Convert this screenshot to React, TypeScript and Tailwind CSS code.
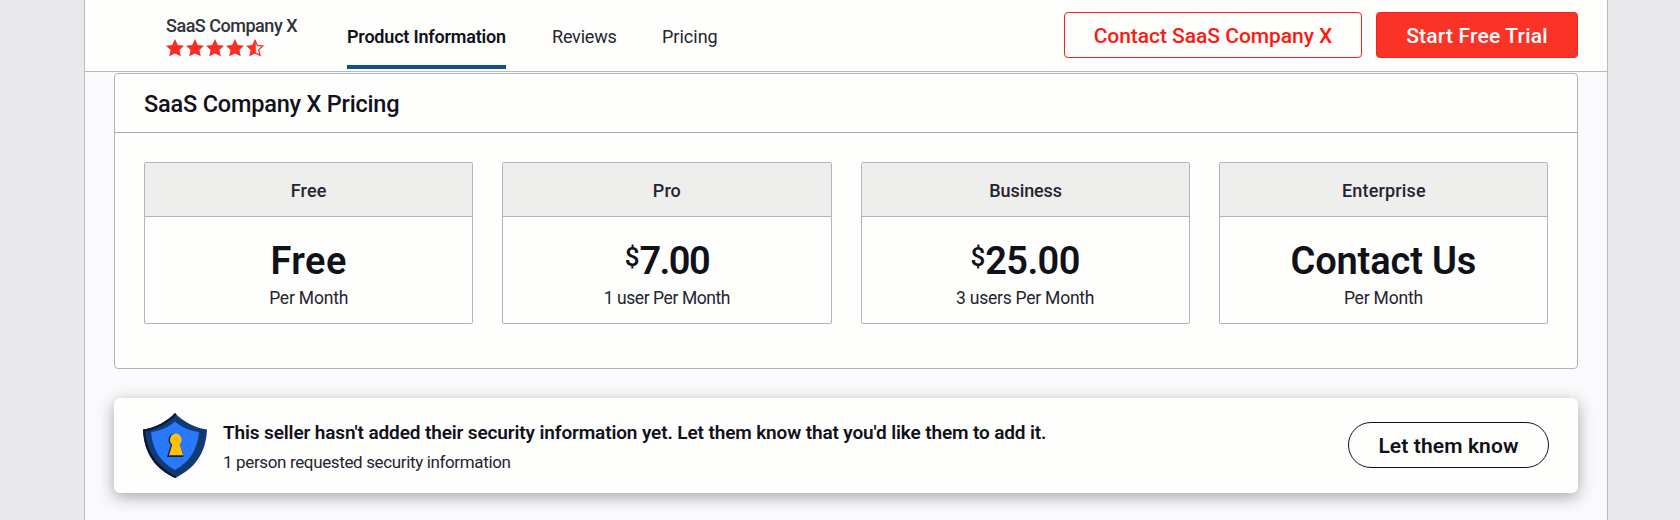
const STAR = "M9 0 L11.8 5.9 L18 6.7 L13.4 11 L14.8 17.3 L9 14.5 L3.2 17.3 L4.6 11 L0 6.7 L6.2 5.9 Z";

function Star({ half = false }: { half?: boolean }) {
  return (
    <svg width="18" height="18" viewBox="0 0 18 18" fill="none">
      {half ? (
        <>
          <path d="M9 0 L6.2 5.9 L0 6.7 L4.6 11 L3.2 17.3 L9.8 14.2 L9.8 1.5 Z" fill="#fb2c21" />
          <path
            d="M9.2 1.4 L11.4 6.4 L16.7 7.1 L12.7 10.9 L14 16.3 L9.2 13.9"
            stroke="#fb2c21"
            strokeWidth="1.3"
          />
        </>
      ) : (
        <path d={STAR} fill="#fb2c21" />
      )}
    </svg>
  );
}

function Shield() {
  return (
    <svg width="64" height="65" viewBox="0 0 64 65" className="shrink-0">
      <path d="M32 0 C25 8 12 15 0 16.500 C1 41 13 56 32 65 C51 56 63 41 64 16.500 C52 15 39 8 32 0 Z" fill="#123a73" />
      <path d="M32 0 C25 8 12 15 0 16.500 C1 41 13 56 32 65 L34 63.800 C16 55 3.500 40 2.200 18.500 C14 16.500 26 9.500 33.500 1.600 Z" fill="#081733" />
      <path d="M32 8.500 C26 14 17 18 8 19 C9.500 36 17 49 32 57 C47 49 54.500 36 56 19 C47 18 38 14 32 8.500 Z" fill="#2879ff" />
      <path d="M31 20.500 A6.500 6.500 0 0 0 27.800 31.800 L24 44 L40.300 44 L40.300 41 L36 31 Z" fill="#0b1f47" />
      <path d="M32.700 20.500 A6.300 6.300 0 0 0 29.200 31.600 L26 42.300 L40.300 42.300 L36.500 31.300 A6.200 6.200 0 0 0 32.700 20.500 Z" fill="#fdc10d" />
    </svg>
  );
}

type Plan = {
  name: string;
  nameClass: string;
  currency?: string;
  price: string;
  priceClass: string;
  unit: string;
  unitClass: string;
};

const plans: Plan[] = [
  { name: "Free", nameClass: "tracking-[0.1px]", price: "Free", priceClass: "tracking-[0.4px]", unit: "Per Month", unitClass: "tracking-[-0.2px]" },
  { name: "Pro", nameClass: "tracking-[0.1px]", currency: "$", price: "7.00", priceClass: "tracking-[-1.6px]", unit: "1 user Per Month", unitClass: "tracking-[-0.42px]" },
  { name: "Business", nameClass: "tracking-[-0.1px] pl-px", currency: "$", price: "25.00", priceClass: "tracking-[-0.6px]", unit: "3 users Per Month", unitClass: "tracking-[-0.24px]" },
  { name: "Enterprise", nameClass: "tracking-[0.15px] pl-px", price: "Contact Us", priceClass: "tracking-[-0.15px]", unit: "Per Month", unitClass: "tracking-[-0.2px]" },
];

function PlanCard({ plan }: { plan: Plan }) {
  return (
    <article className="flex h-[162px] flex-col rounded-[2px] border border-[#b3b4b6] text-center">
      <h3 className={`flex h-[54px] shrink-0 items-center justify-center border-b border-[#b3b4b6] bg-[#eeeeed] pt-px text-[18px] font-medium text-[#24252f] ${plan.nameClass}`}>
        {plan.name}
      </h3>
      <div className="mt-[22px] flex h-[44px] justify-center text-[38px] leading-[44px] font-semibold text-[#11111a]">
        {plan.currency && <span className="-mt-[4px] text-[26px] leading-[44px] font-medium">{plan.currency}</span>}
        <span className={plan.priceClass}>{plan.price}</span>
      </div>
      <p className={`mt-[3px] text-[17.5px] leading-6 text-[#24252f] ${plan.unitClass}`}>{plan.unit}</p>
    </article>
  );
}

export default function App() {
  return (
    <div className="flex h-[520px] justify-center overflow-hidden bg-[#e9e9eb] pl-3 font-['Roboto',sans-serif]">
      <main className="h-full w-[1524px] border-x border-[#bbbcbd] bg-[#fafafd]">
        <header className="flex h-[72px] items-start border-b border-[#b9bab9] bg-[#fefefd] pr-[29px] pl-[81px]">
          <div className="w-[181px] pt-[14px]">
            <div className="text-[18px] leading-6 font-medium tracking-[-0.48px] text-[#30313b]">SaaS Company X</div>
            <div className="mt-px flex gap-0.5">
              <Star />
              <Star />
              <Star />
              <Star />
              <Star half />
            </div>
          </div>
          <nav className="flex gap-[46px] text-[18px] text-[#24252f]">
            <a className="flex h-[69px] w-[159px] items-center border-b-4 border-[#0f5090] pt-[7px] font-semibold tracking-[-0.2px] whitespace-nowrap text-[#11111a]">
              Product Information
            </a>
            <a className="flex h-[65px] w-[64px] items-center pt-[7px] tracking-[-0.2px]">Reviews</a>
            <a className="flex h-[65px] items-center pt-[7px]">Pricing</a>
          </nav>
          <div className="ml-auto flex gap-[14px] pt-3 text-[21px] font-medium">
            <button className="h-[46px] w-[298px] rounded-[4px] border border-[#fb2018] pt-[3px] tracking-[-0.04px] text-[#fb1a12]">
              Contact SaaS Company X
            </button>
            <button className="h-[46px] w-[202px] rounded-[4px] border border-[#fb2018] bg-[#fb3226] pt-[3px] tracking-[0.2px] text-white">
              Start Free Trial
            </button>
          </div>
        </header>

        <div className="px-[29px] pt-px">
          <section className="h-[296px] rounded-[4px] border border-[#b3b4b6] bg-[#fefefd]">
            <h2 className="flex h-[59px] items-center border-b border-[#a9aaab] pt-1 pl-[29px] text-[23.5px] font-medium tracking-[-0.2px] text-[#11111a]">
              SaaS Company X Pricing
            </h2>
            <div className="grid grid-cols-4 gap-[29px] px-[29px] pt-[29px]">
              {plans.map((plan) => (
                <PlanCard key={plan.name} plan={plan} />
              ))}
            </div>
          </section>

          <section className="mt-[29px] flex h-[95px] items-center rounded-[6px] bg-[#fefefd] pr-[29px] pl-[29px] shadow-[0_4px_16px_rgba(0,0,0,0.34)]">
            <Shield />
            <div className="ml-4 pt-1">
              <p className="text-[19px] leading-[30px] font-semibold tracking-[-0.13px] text-[#11111a]">
                This seller hasn't added their security information yet. Let them know that you'd like them to add it.
              </p>
              <p className="text-[17px] leading-[29px] tracking-[-0.36px] text-[#24252f]">
                1 person requested security information
              </p>
            </div>
            <button className="mb-px ml-auto h-[46px] w-[201px] rounded-full border border-[#11111a] pt-[3px] text-[21px] font-semibold tracking-[0.12px] text-[#11111a]">
              Let them know
            </button>
          </section>
        </div>
      </main>
    </div>
  );
}
